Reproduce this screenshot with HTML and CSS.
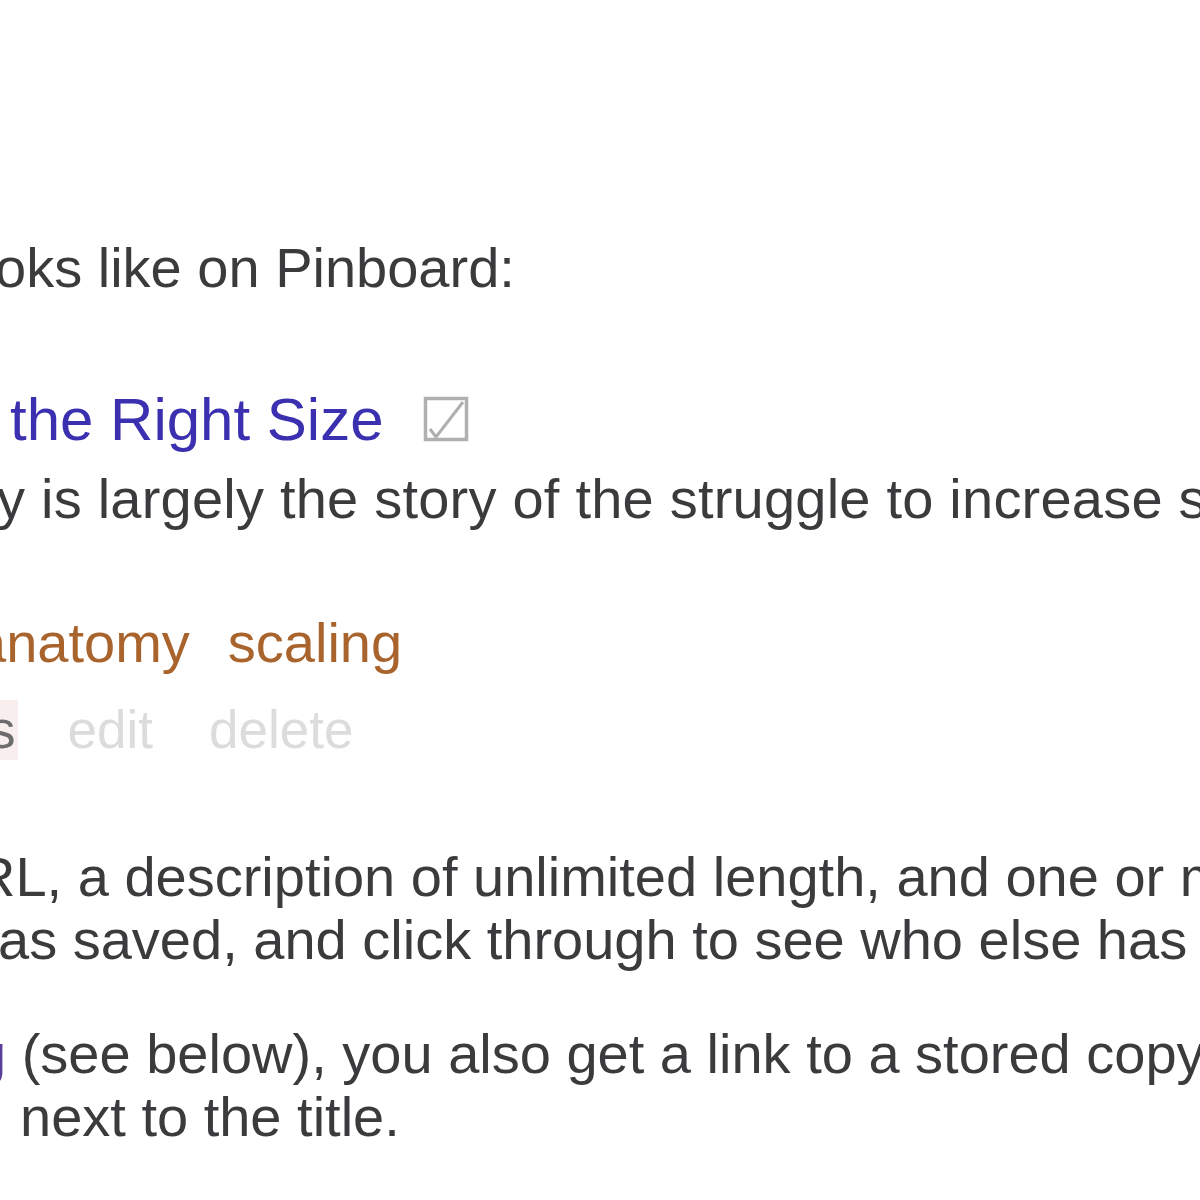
FILE: index.html
```html
<!DOCTYPE html>
<html>
<head>
<meta charset="utf-8">
<link rel="stylesheet" href="styles.css">
</head>
<body>
<div class="page">
  <p class="intro">oks like on Pinboard:</p>
  <div class="bookmark">
    <div class="title-row">
      <a class="title">the Right Size</a>
      <svg class="check" width="46" height="46" viewBox="0 0 46 46"><rect x="2.5" y="2.5" width="41" height="41" fill="none" stroke="#b0b0b0" stroke-width="3.5"/><path d="M7 33 L13 41 L40 6" fill="none" stroke="#b0b0b0" stroke-width="3"/></svg>
    </div>
    <div class="desc">y is largely the story of the struggle to increase surface in proportion to volume.</div>
    <div class="tags"><a class="tag first">anatomy</a><a class="tag">scaling</a></div>
    <div class="actions"><span class="copy">s</span><a class="act edit">edit</a><a class="act">delete</a></div>
  </div>
  <p class="para p1"><span class="l1">RL, a description of unlimited length, and one or more tags.</span><br><span class="l2">as saved, and click through to see who else has saved it.</span></p>
  <p class="para p2"><span class="l3"><a class="link">g</a> (see below), you also get a link to a stored copy of the page</span><br><span class="l4">next to the title.</span></p>
</div>
</body>
</html>
```
FILE: styles.css
```css
html, body {
  margin: 0;
  padding: 0;
  background: #ffffff;
  overflow: hidden;
}
.page {
  width: 1200px;
  height: 1200px;
  overflow: hidden;
  font-family: "Liberation Sans", Arial, sans-serif;
  color: #3b3b3e;
  font-size: 56px;
  line-height: 63px;
  white-space: nowrap;
  padding-top: 236px;
  box-sizing: border-box;
}
p { margin: 0; }
.intro {
  margin-left: -5px;
}
.bookmark {
  margin-top: 88px;
}
.title-row {
  display: flex;
  align-items: center;
  height: 66px;
  margin-left: 10px;
}
.title {
  font-size: 60px;
  line-height: 66px;
  color: #3a30b0;
}
.check {
  margin-left: 39px;
  margin-top: -2px;
}
.desc {
  margin-left: -3px;
  margin-top: 14px;
  letter-spacing: 0.22px;
}
.tags {
  margin-top: 81px;
  margin-left: -25px;
  color: #a8642c;
}
.tag + .tag {
  margin-left: 38px;
}
.actions {
  margin-top: 26px;
  font-size: 53px;
  line-height: 60px;
  display: flex;
  align-items: center;
}
.copy {
  color: #6c6c6c;
  background: #f8eeee;
  margin-left: -22px;
  padding-left: 11px;
  padding-right: 2px;
}
.act {
  color: #dcdcdc;
  margin-left: 56px;
}
.edit { margin-left: 50px; }
.para {
  margin-left: 0;
}
.p1 {
  margin-top: 85px;
}
.p1 .l1 { margin-left: -25px; display: inline-block; }
.p1 .l2 { margin-left: -2px; display: inline-block; }
.p2 {
  margin-top: 51px;
}
.p2 .l3 { margin-left: -25px; display: inline-block; }
.p2 .l4 { margin-left: 20px; display: inline-block; }
.link { color: #5b3f9c; }
```
